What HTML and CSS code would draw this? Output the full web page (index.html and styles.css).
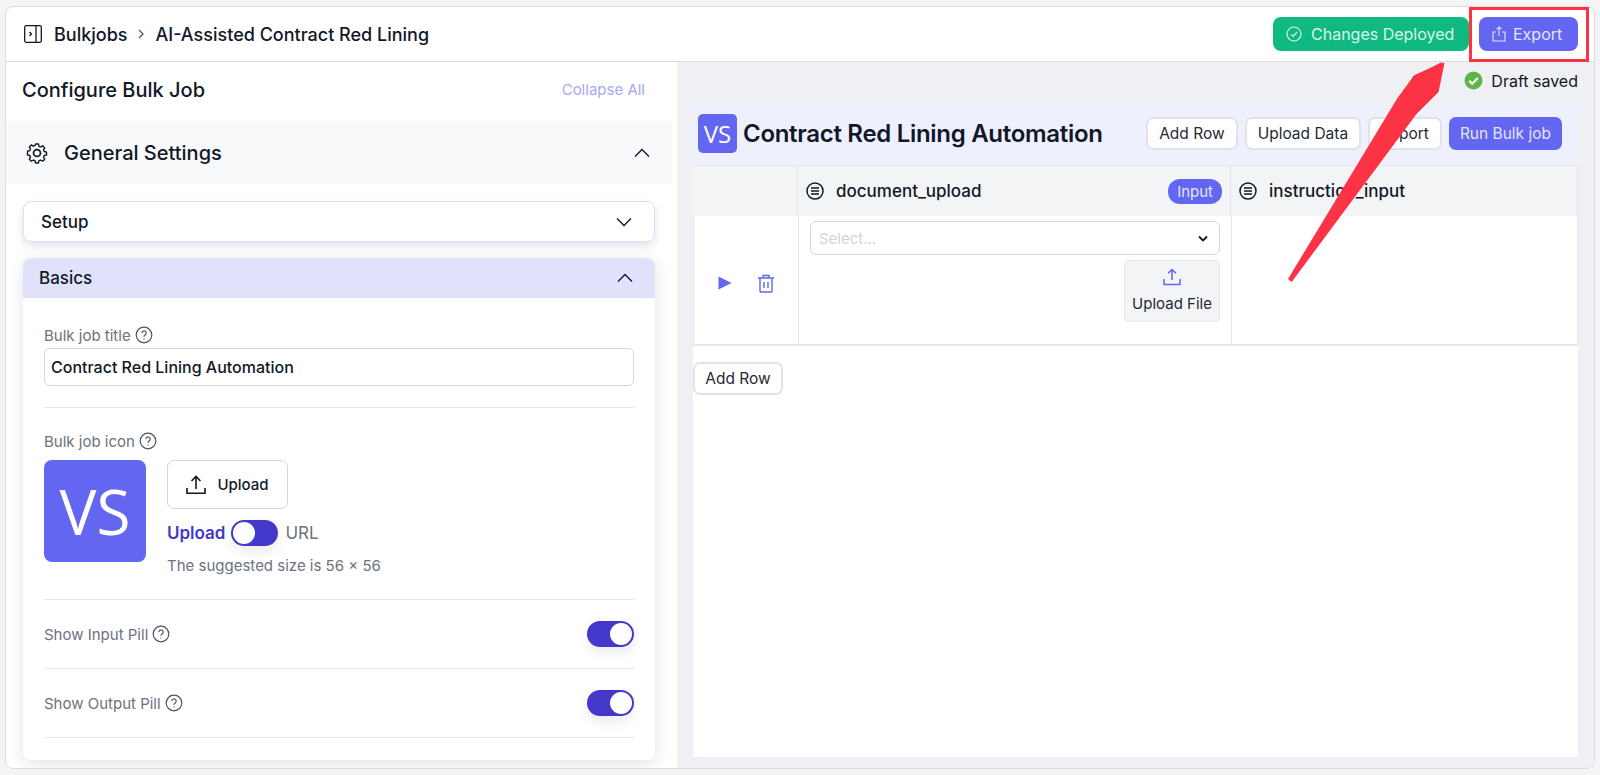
FILE: index.html
```html
<!DOCTYPE html>
<html lang="en">
<head>
  <meta charset="UTF-8" />
  <meta name="viewport" content="width=device-width,initial-scale=1.0">
  <title>Bulkjobs</title>
  <link rel="stylesheet" href="styles.css">
</head>
<body>
  <div class="app">
    <header class="topbar">
      <div class="crumbs">
        <svg class="panel-icon" width="18" height="18" viewBox="0 0 18 18" fill="none" stroke="#111827" stroke-width="1.3"><rect x="0.7" y="0.7" width="16.6" height="16.6" rx="1.5"/><path d="M12 1v16"/><path d="M5.5 7l2 2-2 2"/></svg>
        <span>Bulkjobs</span>
        <svg class="crumb-sep" width="8" height="12" viewBox="0 0 8 12" fill="none" stroke="#4b5563" stroke-width="1.3"><path d="M2 2l4 4-4 4"/></svg>
        <span>AI-Assisted Contract Red Lining</span>
      </div>
      <div class="top-actions">
        <button class="btn-deployed">
          <svg width="16" height="16" viewBox="0 0 16 16" fill="none" stroke="currentColor" stroke-width="1.2"><circle cx="8" cy="8" r="7"/><path d="M5 8.3l2.1 2.1L11 6"/></svg>
          Changes Deployed
        </button>
        <button class="btn-export">
          <svg width="14" height="16" viewBox="0 0 14 16" fill="none" stroke="currentColor" stroke-width="1.1"><path d="M4 6H1v9h12V6h-3"/><path d="M7 10V1M4.6 3.2L7 1l2.4 2.2"/></svg>
          Export
        </button>
      </div>
    </header>

    <div class="main">
      <aside class="left">
        <div class="config-head">
          <h1>Configure Bulk Job</h1>
          <span class="collapse">Collapse All</span>
        </div>
        <div class="general">
          <div class="general-title">
            <svg width="26" height="28" viewBox="0 0 24 24" fill="none" stroke="#111827" stroke-width="1.6" stroke-linecap="round" stroke-linejoin="round"><path d="M10.3 2.6h3.4l.6 2.7 1.9.8 2.4-1.4 2.3 2.4-1.4 2.3.8 1.9 2.7.7v3.3l-2.7.6-.8 1.9 1.4 2.4-2.3 2.3-2.4-1.4-1.9.8-.6 2.6h-3.4l-.6-2.6-1.9-.8-2.4 1.4-2.3-2.3 1.4-2.4-.8-1.9-2.7-.6V11l2.7-.7.8-1.9-1.4-2.3 2.3-2.4 2.4 1.4 1.9-.8z" transform="translate(2.4 1.6) scale(.8)"/><circle cx="12" cy="12" r="3.2"/></svg>
            <span>General Settings</span>
          </div>
          <svg class="chev" width="16" height="10" viewBox="0 0 16 10" fill="none" stroke="#111827" stroke-width="1.4"><path d="M1 8.5l7-7 7 7"/></svg>
        </div>

        <div class="setup">
          <span>Setup</span>
          <svg width="16" height="10" viewBox="0 0 16 10" fill="none" stroke="#111827" stroke-width="1.4"><path d="M1 1.5l7 7 7-7"/></svg>
        </div>

        <section class="basics">
          <div class="basics-head">
            <span>Basics</span>
            <svg width="16" height="10" viewBox="0 0 16 10" fill="none" stroke="#111827" stroke-width="1.4"><path d="M1 8.5l7-7 7 7"/></svg>
          </div>
          <div class="basics-body">
            <div class="field">
              <label class="label">Bulk job title
                <svg class="help" width="18" height="18" viewBox="0 0 18 18" fill="none" stroke="#4b5563" stroke-width="1.2"><circle cx="9" cy="9" r="7.8"/><path d="M6.8 7a2.2 2.2 0 1 1 3.3 2c-.8.5-1.1.9-1.1 1.7"/><path d="M9 12.6v.8"/></svg>
              </label>
              <div class="text-input">Contract Red Lining Automation</div>
            </div>
            <div class="field field-icon">
              <label class="label">Bulk job icon
                <svg class="help" width="18" height="18" viewBox="0 0 18 18" fill="none" stroke="#4b5563" stroke-width="1.2"><circle cx="9" cy="9" r="7.8"/><path d="M6.8 7a2.2 2.2 0 1 1 3.3 2c-.8.5-1.1.9-1.1 1.7"/><path d="M9 12.6v.8"/></svg>
              </label>
              <div class="icon-row">
                <div class="vs-big">VS</div>
                <div class="icon-controls">
                  <button class="btn-upload">
                    <svg width="20" height="20" viewBox="0 0 20 20" fill="none" stroke="#111827" stroke-width="1.6"><path d="M1 13v5.2h18V13"/><path d="M10 14V1.5M5.5 6L10 1.5 14.500 6"/></svg>
                    Upload
                  </button>
                  <div class="mode">
                    <span class="mode-on">Upload</span>
                    <span class="toggle toggle-left"></span>
                    <span class="mode-off">URL</span>
                  </div>
                  <div class="hint">The suggested size is 56 × 56</div>
                </div>
              </div>
            </div>
            <div class="pill-row">
              <label class="label">Show Input Pill
                <svg class="help" width="18" height="18" viewBox="0 0 18 18" fill="none" stroke="#4b5563" stroke-width="1.2"><circle cx="9" cy="9" r="7.8"/><path d="M6.8 7a2.2 2.2 0 1 1 3.3 2c-.8.5-1.1.9-1.1 1.7"/><path d="M9 12.6v.8"/></svg>
              </label>
              <span class="toggle"></span>
            </div>
            <div class="pill-row">
              <label class="label">Show Output Pill
                <svg class="help" width="18" height="18" viewBox="0 0 18 18" fill="none" stroke="#4b5563" stroke-width="1.2"><circle cx="9" cy="9" r="7.8"/><path d="M6.8 7a2.2 2.2 0 1 1 3.3 2c-.8.5-1.1.9-1.1 1.7"/><path d="M9 12.6v.8"/></svg>
              </label>
              <span class="toggle"></span>
            </div>
          </div>
        </section>
      </aside>

      <main class="right">
        <div class="draft">
          <svg width="19" height="19" viewBox="0 0 19 19"><circle cx="9.5" cy="9.500" r="9" fill="#5fb548"/><path d="M5.2 9.800l3 3 5.600-5.800" fill="none" stroke="#fff" stroke-width="2"/></svg>
          <span>Draft saved</span>
        </div>
        <div class="sheet">
          <div class="sheet-head">
            <div class="sheet-title">
              <div class="vs-small">VS</div>
              <h2>Contract Red Lining Automation</h2>
            </div>
            <div class="sheet-actions">
              <button class="btn">Add Row</button>
              <button class="btn">Upload Data</button>
              <button class="btn">Export</button>
              <button class="btn btn-run">Run Bulk job</button>
            </div>
          </div>

          <div class="grid grid-head">
            <div class="cell"></div>
            <div class="cell col-name">
              <svg width="18" height="18" viewBox="0 0 18 18" fill="none" stroke="#111827" stroke-width="1.5"><circle cx="9" cy="9" r="8"/><path d="M5 6h8M5 9h8M5 12h8"/></svg>
              <span>document_upload</span>
              <span class="pill">Input</span>
            </div>
            <div class="cell col-name">
              <svg width="18" height="18" viewBox="0 0 18 18" fill="none" stroke="#111827" stroke-width="1.5"><circle cx="9" cy="9" r="8"/><path d="M5 6h8M5 9h8M5 12h8"/></svg>
              <span>instruction_input</span>
            </div>
          </div>

          <div class="grid grid-row">
            <div class="cell row-tools">
              <svg width="14" height="14" viewBox="0 0 14 14"><path d="M0.500 0.500L13.500 7 0.500 13.500z" fill="#6366f1"/></svg>
              <svg width="16" height="19" viewBox="0 0 16 19" fill="none" stroke="#6366f1" stroke-width="1.4"><path d="M0 4h16M5 4V1.500h6V4M2 4v13a1.300 1.300 0 0 0 1.300 1h9.400a1.300 1.300 0 0 0 1.300-1V4M6 8v6M10 8v6"/></svg>
            </div>
            <div class="cell cell-upload">
              <div class="select">
                <span>Select...</span>
                <svg width="10" height="7" viewBox="0 0 10 7" fill="none" stroke="#111827" stroke-width="1.800"><path d="M1 1.500l4 4 4-4"/></svg>
              </div>
              <button class="btn-file">
                <svg width="18" height="18" viewBox="0 0 18 18" fill="none" stroke="#6366f1" stroke-width="1.500"><path d="M1 11v5.500h16V11"/><path d="M9 12V1.500M5 5.300L9 1.500l4 3.800"/></svg>
                Upload File
              </button>
            </div>
            <div class="cell"></div>
          </div>

          <div class="sheet-foot">
            <button class="btn">Add Row</button>
          </div>
        </div>
      </main>
    </div>
  </div>

  <!-- annotation drawn over the screenshot -->
  <div class="callout-box"></div>
  <svg class="callout-arrow" width="200" height="240" viewBox="0 0 200 240"><path d="M18.500 219l3 2.500L146 54 168 32 174 3 144.500 15.500 128 38z" fill="#fb3345" stroke="#fb3345" stroke-linejoin="round"/><path d="M172 2L142 17 165 33z" fill="#fb3345"/></svg>
</body>
</html>
```

FILE: styles.css
```css
* {
  box-sizing: border-box;
}

html, body {
  margin: 0;
  padding: 0;
  height: 100vh;
  overflow: hidden;
  background-color: #f3f4f6;
  font-family: "Inter", "Liberation Sans", sans-serif;
  color: #111827;
}

button {
  font-family: inherit;
  cursor: pointer;
}

.app {
  display: flex;
  flex-direction: column;
  margin: 6px 5px 0;
  height: 763px;
  border: 1px solid #dcdde3;
  border-radius: 8px;
  overflow: hidden;
  background: #fff;
}

.topbar {
  display: flex;
  align-items: center;
  justify-content: space-between;
  flex: none;
  height: 55px;
  padding: 0 16px 0 18px;
  border-bottom: 1px solid #dcdde3;
}

.crumbs {
  display: flex;
  align-items: center;
  font-size: 18px;
  font-weight: 450;
}

.panel-icon {
  margin-right: 12px;
}

.crumb-sep {
  margin: 0 10px 0 10px;
}

.top-actions {
  display: flex;
  gap: 10px;
}

.btn-deployed,
.btn-export {
  display: flex;
  align-items: center;
  gap: 9px;
  height: 34px;
  border: none;
  border-radius: 8px;
  font-size: 16px;
  font-weight: 400;
}

.btn-deployed {
  width: 196px;
  padding-left: 13px;
  gap: 9px;
  background: #10b981;
  color: #d9f5ea;
}

.btn-export {
  width: 99px;
  padding-left: 13px;
  gap: 7px;
  background: #6366f1;
  color: #e4e5fd;
}

.main {
  display: flex;
  flex: 1;
  min-height: 0;
}

.left {
  flex: none;
  width: 671px;
  padding-right: 5px;
  overflow: hidden;
}

.config-head {
  display: flex;
  align-items: center;
  justify-content: space-between;
  height: 59px;
  padding: 0 27px 4px 16px;
}

.config-head h1 {
  margin: 0;
  font-size: 20px;
  font-weight: 500;
}

.collapse {
  font-size: 15px;
  color: #a5a8f8;
}

.general {
  display: flex;
  align-items: center;
  justify-content: space-between;
  height: 63px;
  padding: 0 22px 0 18px;
  background: #f8f9fa;
}

.general-title {
  display: flex;
  align-items: center;
  gap: 14px;
  font-size: 20px;
  font-weight: 550;
}

.setup {
  display: flex;
  align-items: center;
  justify-content: space-between;
  height: 41px;
  margin: 17px 17px 16px;
  padding: 0 22px 0 17px;
  border: 1px solid #dcdffb;
  border-radius: 8px;
  background: #fff;
  font-size: 17px;
  font-weight: 450;
  box-shadow: 0 4px 8px rgba(60, 60, 90, 0.14);
}

.basics {
  margin: 0 17px;
  border-radius: 8px;
  background: #fff;
  box-shadow: 0 4px 16px rgba(60, 60, 90, 0.14);
}

.basics-head {
  display: flex;
  align-items: center;
  justify-content: space-between;
  height: 40px;
  padding: 0 22px 0 16px;
  border-radius: 8px 8px 0 0;
  background: #e0e2fb;
  font-size: 17px;
  font-weight: 450;
}

.basics-body {
  padding: 27px 21px 22px;
}

.label {
  display: flex;
  align-items: center;
  gap: 4px;
  height: 20px;
  font-size: 15px;
  color: #6b7280;
}

.text-input {
  display: flex;
  align-items: center;
  height: 38px;
  margin-top: 3px;
  padding-left: 6px;
  border: 1px solid #d4d6dc;
  border-radius: 5px;
  font-size: 16px;
  font-weight: 450;
}

.field {
  padding-bottom: 21px;
  border-bottom: 1px solid #e5e7eb;
}

.field-icon {
  padding-top: 23px;
  padding-bottom: 0;
  height: 192px;
}

.icon-row {
  display: flex;
  gap: 21px;
  margin-top: 9px;
}

.vs-big {
  display: flex;
  align-items: center;
  justify-content: center;
  width: 102px;
  height: 102px;
  border-radius: 8px;
  background: #6366f1;
  color: #fff;
  font-family: "Open Sans", "Liberation Sans", sans-serif;
  font-size: 62px;
}

.icon-controls {
  display: flex;
  flex-direction: column;
  align-items: flex-start;
}

.btn-upload {
  display: flex;
  align-items: center;
  justify-content: center;
  gap: 11px;
  width: 121px;
  height: 49px;
  border: 1px solid #d4d6dc;
  border-radius: 7px;
  background: #fff;
  color: #111827;
  font-size: 15px;
  font-weight: 500;
}

.mode {
  display: flex;
  align-items: center;
  gap: 6px;
  margin-top: 11px;
  font-size: 17px;
}

.mode-on {
  color: #4338ca;
  font-weight: 600;
}

.mode-off {
  color: #6b7280;
  margin-left: 1px;
}

.toggle {
  position: relative;
  display: block;
  width: 47px;
  height: 26px;
  border-radius: 13px;
  background: #4338ca;
  box-shadow: 0 6px 12px rgba(70, 70, 120, 0.1);
}

.toggle::after {
  content: "";
  position: absolute;
  top: 2px;
  right: 2px;
  width: 22px;
  height: 22px;
  border-radius: 50%;
  background: #fff;
}

.toggle-left::after {
  right: auto;
  left: 2px;
}

.hint {
  margin-top: 10px;
  font-size: 15px;
  color: #6b7280;
}

.pill-row {
  display: flex;
  align-items: center;
  justify-content: space-between;
  height: 69px;
  border-bottom: 1px solid #e5e7eb;
}

.right {
  flex: 1;
  display: flex;
  flex-direction: column;
  min-width: 0;
  padding: 0 16px 11px;
  background: #eef0f4;
}

.draft {
  display: flex;
  align-items: center;
  justify-content: flex-end;
  gap: 8px;
  flex: none;
  height: 42px;
  padding-bottom: 5px;
  font-size: 16px;
}

.sheet {
  flex: 1;
  display: flex;
  flex-direction: column;
  background: #fff;
}

.sheet-head {
  display: flex;
  align-items: center;
  justify-content: space-between;
  flex: none;
  height: 61px;
  padding: 0 16px 2px 5px;
  background: #eef0fe;
}

.sheet-title {
  display: flex;
  align-items: center;
  gap: 6px;
}

.sheet-title h2 {
  margin: 0;
  font-size: 24px;
  font-weight: 600;
  letter-spacing: -0.3px;
}

.vs-small {
  display: flex;
  align-items: center;
  justify-content: center;
  width: 39px;
  height: 39px;
  border-radius: 5px;
  background: #6366f1;
  color: #fff;
  font-family: "Open Sans", "Liberation Sans", sans-serif;
  font-size: 24px;
}

.sheet-actions {
  display: flex;
  gap: 7px;
}

.btn {
  height: 33px;
  padding: 0 11px;
  border: 2px solid #e1e3e9;
  border-radius: 7px;
  background: #fff;
  color: #1f2937;
  font-size: 15.500px;
  font-weight: 400;
}

.btn-run {
  padding: 0 11px;
  border: none;
  background: #6366f1;
  color: #e4e5fd;
}

.grid {
  display: grid;
  grid-template-columns: 105px 433px 1fr;
}

.grid-head {
  height: 51px;
  flex: none;
  background: #f3f4f6;
  border-top: 1px solid #e5e7eb;
}

.grid-head .cell {
  border-right: 1px solid #e2e4e9;
}

.col-name {
  display: flex;
  align-items: center;
  gap: 12px;
  padding: 0 8px 0 8px;
  font-size: 17px;
  font-weight: 500;
}

.pill {
  margin-left: auto;
  padding: 3px 9px;
  border-radius: 12px;
  background: #6366f1;
  color: #e4e5fd;
  font-size: 15px;
  font-weight: 400;
}

.grid-row {
  flex: none;
  height: 130px;
  border-bottom: 2px solid #e5e7eb;
  border-left: 1px solid #e5e7eb;
}

.grid-row .cell {
  border-right: 1px solid #e5e7eb;
}

.row-tools {
  display: flex;
  align-items: center;
  justify-content: center;
  gap: 26px;
  padding-top: 6px;
}

.cell-upload {
  display: flex;
  flex-direction: column;
  align-items: flex-end;
  gap: 5px;
  padding: 5px 11px 0;
}

.select {
  display: flex;
  align-items: center;
  justify-content: space-between;
  width: 100%;
  height: 34px;
  padding: 0 11px 0 8px;
  border: 1px solid #d4d6dc;
  border-radius: 6px;
  color: #d1d5db;
  font-size: 15px;
}

.btn-file {
  display: flex;
  flex-direction: column;
  align-items: center;
  gap: 8px;
  width: 96px;
  height: 62px;
  padding: 7px 0 0;
  border: 1px solid #e5e7eb;
  border-radius: 5px;
  background: #f3f4f6;
  color: #1f2937;
  font-size: 15px;
}

.sheet-foot {
  padding-top: 16px;
}

.sheet-foot .btn {
  width: 90px;
  height: 33px;
  padding: 0;
}

/* annotation */
.callout-box {
  position: absolute;
  left: 1469px;
  top: 7px;
  width: 120px;
  height: 55px;
  border: 3px solid #fb3345;
}

.callout-arrow {
  position: absolute;
  left: 1270px;
  top: 60px;
}
```
